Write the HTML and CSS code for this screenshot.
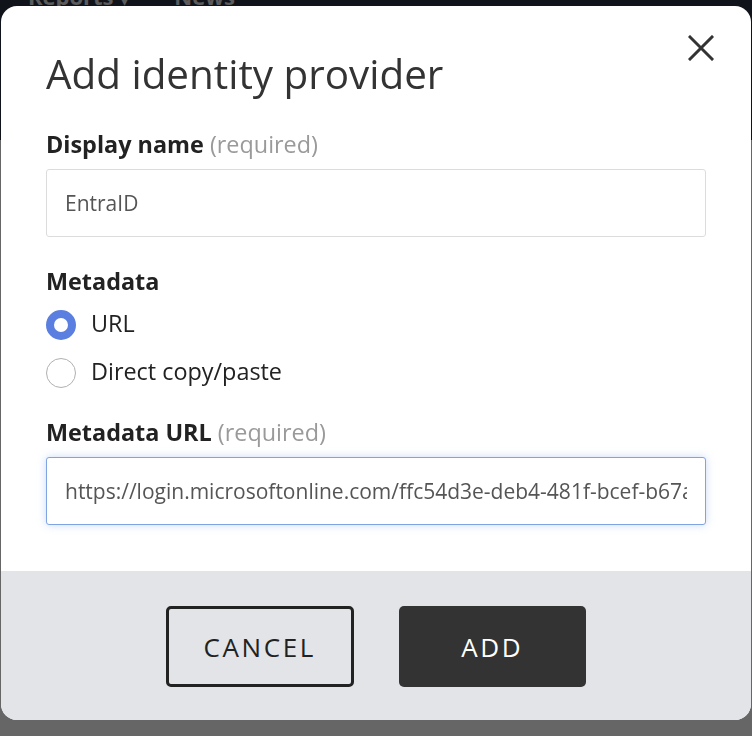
FILE: index.html
```html
<!DOCTYPE html>
<html lang="en">
<head>
<meta charset="utf-8">
<title>Add identity provider</title>
<link rel="stylesheet" href="styles.css">
</head>
<body>
<div class="page">
  <header class="topbar">
    <nav class="nav">
      <span class="nav-item">Reports &#9662;</span>
      <span class="nav-item">News</span>
    </nav>
  </header>
  <main class="content"></main>
</div>
<div class="overlay">
  <div class="modal" role="dialog" aria-labelledby="dlg-title">
    <div class="modal-body">
      <button class="close" aria-label="Close">
        <svg width="26" height="26" viewBox="0 0 26 26" aria-hidden="true">
          <path d="M2 2 L24 24 M24 2 L2 24" stroke="#333" stroke-width="3" stroke-linecap="square" fill="none"/>
        </svg>
      </button>
      <h1 id="dlg-title" class="title">Add identity provider</h1>

      <div class="field">
        <div class="field-label">Display name <span class="req">(required)</span></div>
        <div class="text-input"><span class="value">EntraID</span></div>
      </div>

      <div class="field">
        <div class="field-label field-label-radio">Metadata</div>
        <div class="radio-group">
          <div class="radio-row">
            <span class="radio checked"></span>
            <span class="radio-text">URL</span>
          </div>
          <div class="radio-row">
            <span class="radio"></span>
            <span class="radio-text">Direct copy/paste</span>
          </div>
        </div>
      </div>

      <div class="field">
        <div class="field-label">Metadata URL <span class="req">(required)</span></div>
        <div class="text-input focused"><span class="value">https://login.microsoftonline.com/ffc54d3e-deb4-481f-bcef-b67a9c2d1e08/federationmetadata/2007-06/federationmetadata.xml</span></div>
      </div>
    </div>
    <div class="modal-footer">
      <button class="btn btn-outline">CANCEL</button>
      <button class="btn btn-solid">ADD</button>
    </div>
  </div>
</div>
</body>
</html>
```

FILE: styles.css
```css
* { box-sizing: border-box; }

html, body {
  margin: 0;
  padding: 0;
  height: 100%;
}

body {
  font-family: "Open Sans", "Noto Sans", sans-serif;
  background: #ffffff;
  overflow: hidden;
}

.page {
  height: 100%;
}

.topbar {
  height: 140px;
  background: #2c3142;
  overflow: hidden;
}

.nav {
  display: flex;
  gap: 44px;
  padding-left: 28px;
  margin-top: -14px;
  line-height: 20px;
}

.nav-item {
  font-size: 22px;
  font-weight: 700;
  color: #e6e6e6;
}

.content {
  background: #ffffff;
}

.overlay {
  position: fixed;
  inset: 0;
  background: rgba(0, 0, 0, 0.6);
  padding: 6px 0 0 1px;
}

.modal {
  width: 750px;
  height: 714px;
  background: #ffffff;
  border-radius: 16px;
  overflow: hidden;
  display: flex;
  flex-direction: column;
}

.modal-body {
  position: relative;
  flex: 1;
  padding: 44px 45px 0 45px;
}

.close {
  position: absolute;
  top: 22px;
  right: 30px;
  width: 40px;
  height: 40px;
  padding: 0;
  border: 0;
  background: transparent;
  display: flex;
  align-items: center;
  justify-content: center;
}

.title {
  margin: 0 0 31px 0;
  font-size: 40.4px;
  font-weight: 400;
  line-height: 48px;
  color: #333333;
}

.field {
  margin-bottom: 29px;
}

.field-label {
  display: block;
  font-size: 23.4px;
  font-weight: 700;
  line-height: 30px;
  color: #222222;
  margin-bottom: 10px;
}

.field-label-radio {
  margin-bottom: 14px;
}

.req {
  font-weight: 400;
  color: #9a9a9a;
}

.text-input {
  display: flex;
  align-items: center;
  width: 660px;
  height: 68px;
  padding: 0 18px;
  border: 1px solid #dcdcdc;
  border-radius: 3px;
  background: #ffffff;
  font-size: 21px;
  color: #555555;
}

.text-input .value {
  flex: 1;
  min-width: 0;
  overflow: hidden;
  white-space: nowrap;
}

.text-input.focused {
  border-color: #7fa3e3;
  box-shadow: 0 0 8px rgba(102, 150, 230, 0.35);
}

.radio-group {
  display: flex;
  flex-direction: column;
  gap: 18px;
}

.radio-row {
  display: flex;
  align-items: flex-start;
  gap: 15px;
}

.radio {
  width: 30px;
  height: 30px;
  border-radius: 50%;
  border: 1px solid #b0b0b0;
  background: #ffffff;
  flex: none;
}

.radio.checked {
  border: 8px solid #5a7fe0;
}

.radio-text {
  font-size: 23.4px;
  line-height: 26px;
  color: #222222;
}

.modal-footer {
  height: 149px;
  background: #e3e4e8;
  display: flex;
  align-items: flex-start;
  justify-content: center;
  gap: 45px;
  padding-top: 35px;
}

.btn {
  width: 187.5px;
  height: 81px;
  border-radius: 5px;
  font-family: "Open Sans", "Noto Sans", sans-serif;
  font-size: 26px;
  letter-spacing: 2.6px;
  padding: 0;
}

.btn-outline {
  background: transparent;
  border: 3px solid #222222;
  color: #222222;
}

.btn-solid {
  background: #333333;
  border: 0;
  color: #ffffff;
}
```
